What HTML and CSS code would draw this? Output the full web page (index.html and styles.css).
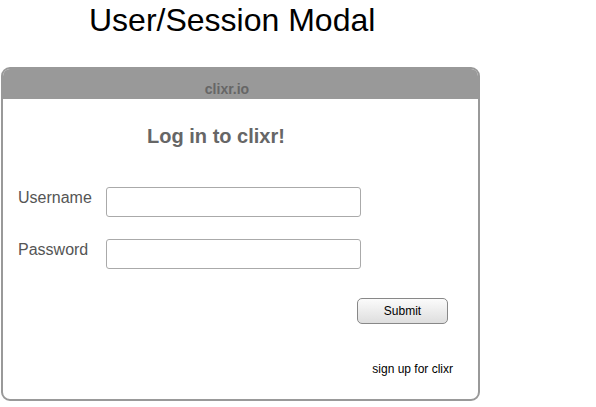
FILE: index.html
```html
<!DOCTYPE html>
<html>
<head>
<meta charset="utf-8">
<link rel="stylesheet" href="styles.css">
</head>
<body>
<h1 class="page-title">User/Session Modal</h1>
<div class="modal">
  <div class="modal-header">clixr.io</div>
  <div class="modal-body">
    <h2 class="modal-title">Log in to clixr!</h2>
    <div class="field">
      <label class="field-label">Username</label>
      <div class="field-input"></div>
    </div>
    <div class="field">
      <label class="field-label">Password</label>
      <div class="field-input"></div>
    </div>
    <div class="actions">
      <div class="btn">Submit</div>
    </div>
    <div class="signup">sign up for clixr</div>
  </div>
</div>
</body>
</html>
```
FILE: styles.css
```css
html, body {
  margin: 0;
  padding: 0;
  background: #fff;
  font-family: "Liberation Sans", Arial, sans-serif;
}
.page-title {
  margin: 0;
  padding: 2px 0 0 89px;
  height: 67px;
  box-sizing: border-box;
  font-size: 32px;
  font-weight: normal;
  color: #000;
  line-height: 36px;
}
.modal {
  margin-left: 1px;
  width: 479px;
  height: 334px;
  box-sizing: border-box;
  border: 2px solid #999;
  border-radius: 9px;
  overflow: hidden;
  display: flex;
  flex-direction: column;
}
.modal-header {
  background: #999;
  height: 30px;
  flex: none;
  color: #666;
  font-weight: bold;
  font-size: 14px;
  text-align: center;
  line-height: 40px;
  padding-right: 27px;
}
.modal-body {
  flex: 1;
  display: flex;
  flex-direction: column;
  padding: 0 0 0 15px;
}
.modal-title {
  margin: 25px 0 0 0;
  text-align: center;
  font-size: 20px;
  color: #666;
  font-weight: bold;
  line-height: 24px;
  padding-right: 64px;
}
.field {
  display: flex;
  align-items: flex-start;
  margin-top: 22px;
}
.modal-title + .field {
  margin-top: 39px;
}
.field-label {
  width: 88px;
  font-size: 16px;
  color: #555;
  line-height: 21px;
  flex: none;
}
.field-input {
  width: 253px;
  height: 28px;
  border: 1px solid #aaa;
  border-radius: 3px;
  background: #fff;
}
.actions {
  display: flex;
  justify-content: flex-end;
  margin-top: 29px;
  padding-right: 30px;
}
.btn {
  width: 91px;
  height: 26px;
  box-sizing: border-box;
  border: 1px solid #888;
  border-radius: 5px;
  background: linear-gradient(#fbfbfb, #dedede);
  font-size: 12px;
  color: #000;
  text-align: center;
  line-height: 24px;
}
.signup {
  margin-top: 38px;
  text-align: right;
  padding-right: 25px;
  font-size: 12px;
  color: #000;
}
```
